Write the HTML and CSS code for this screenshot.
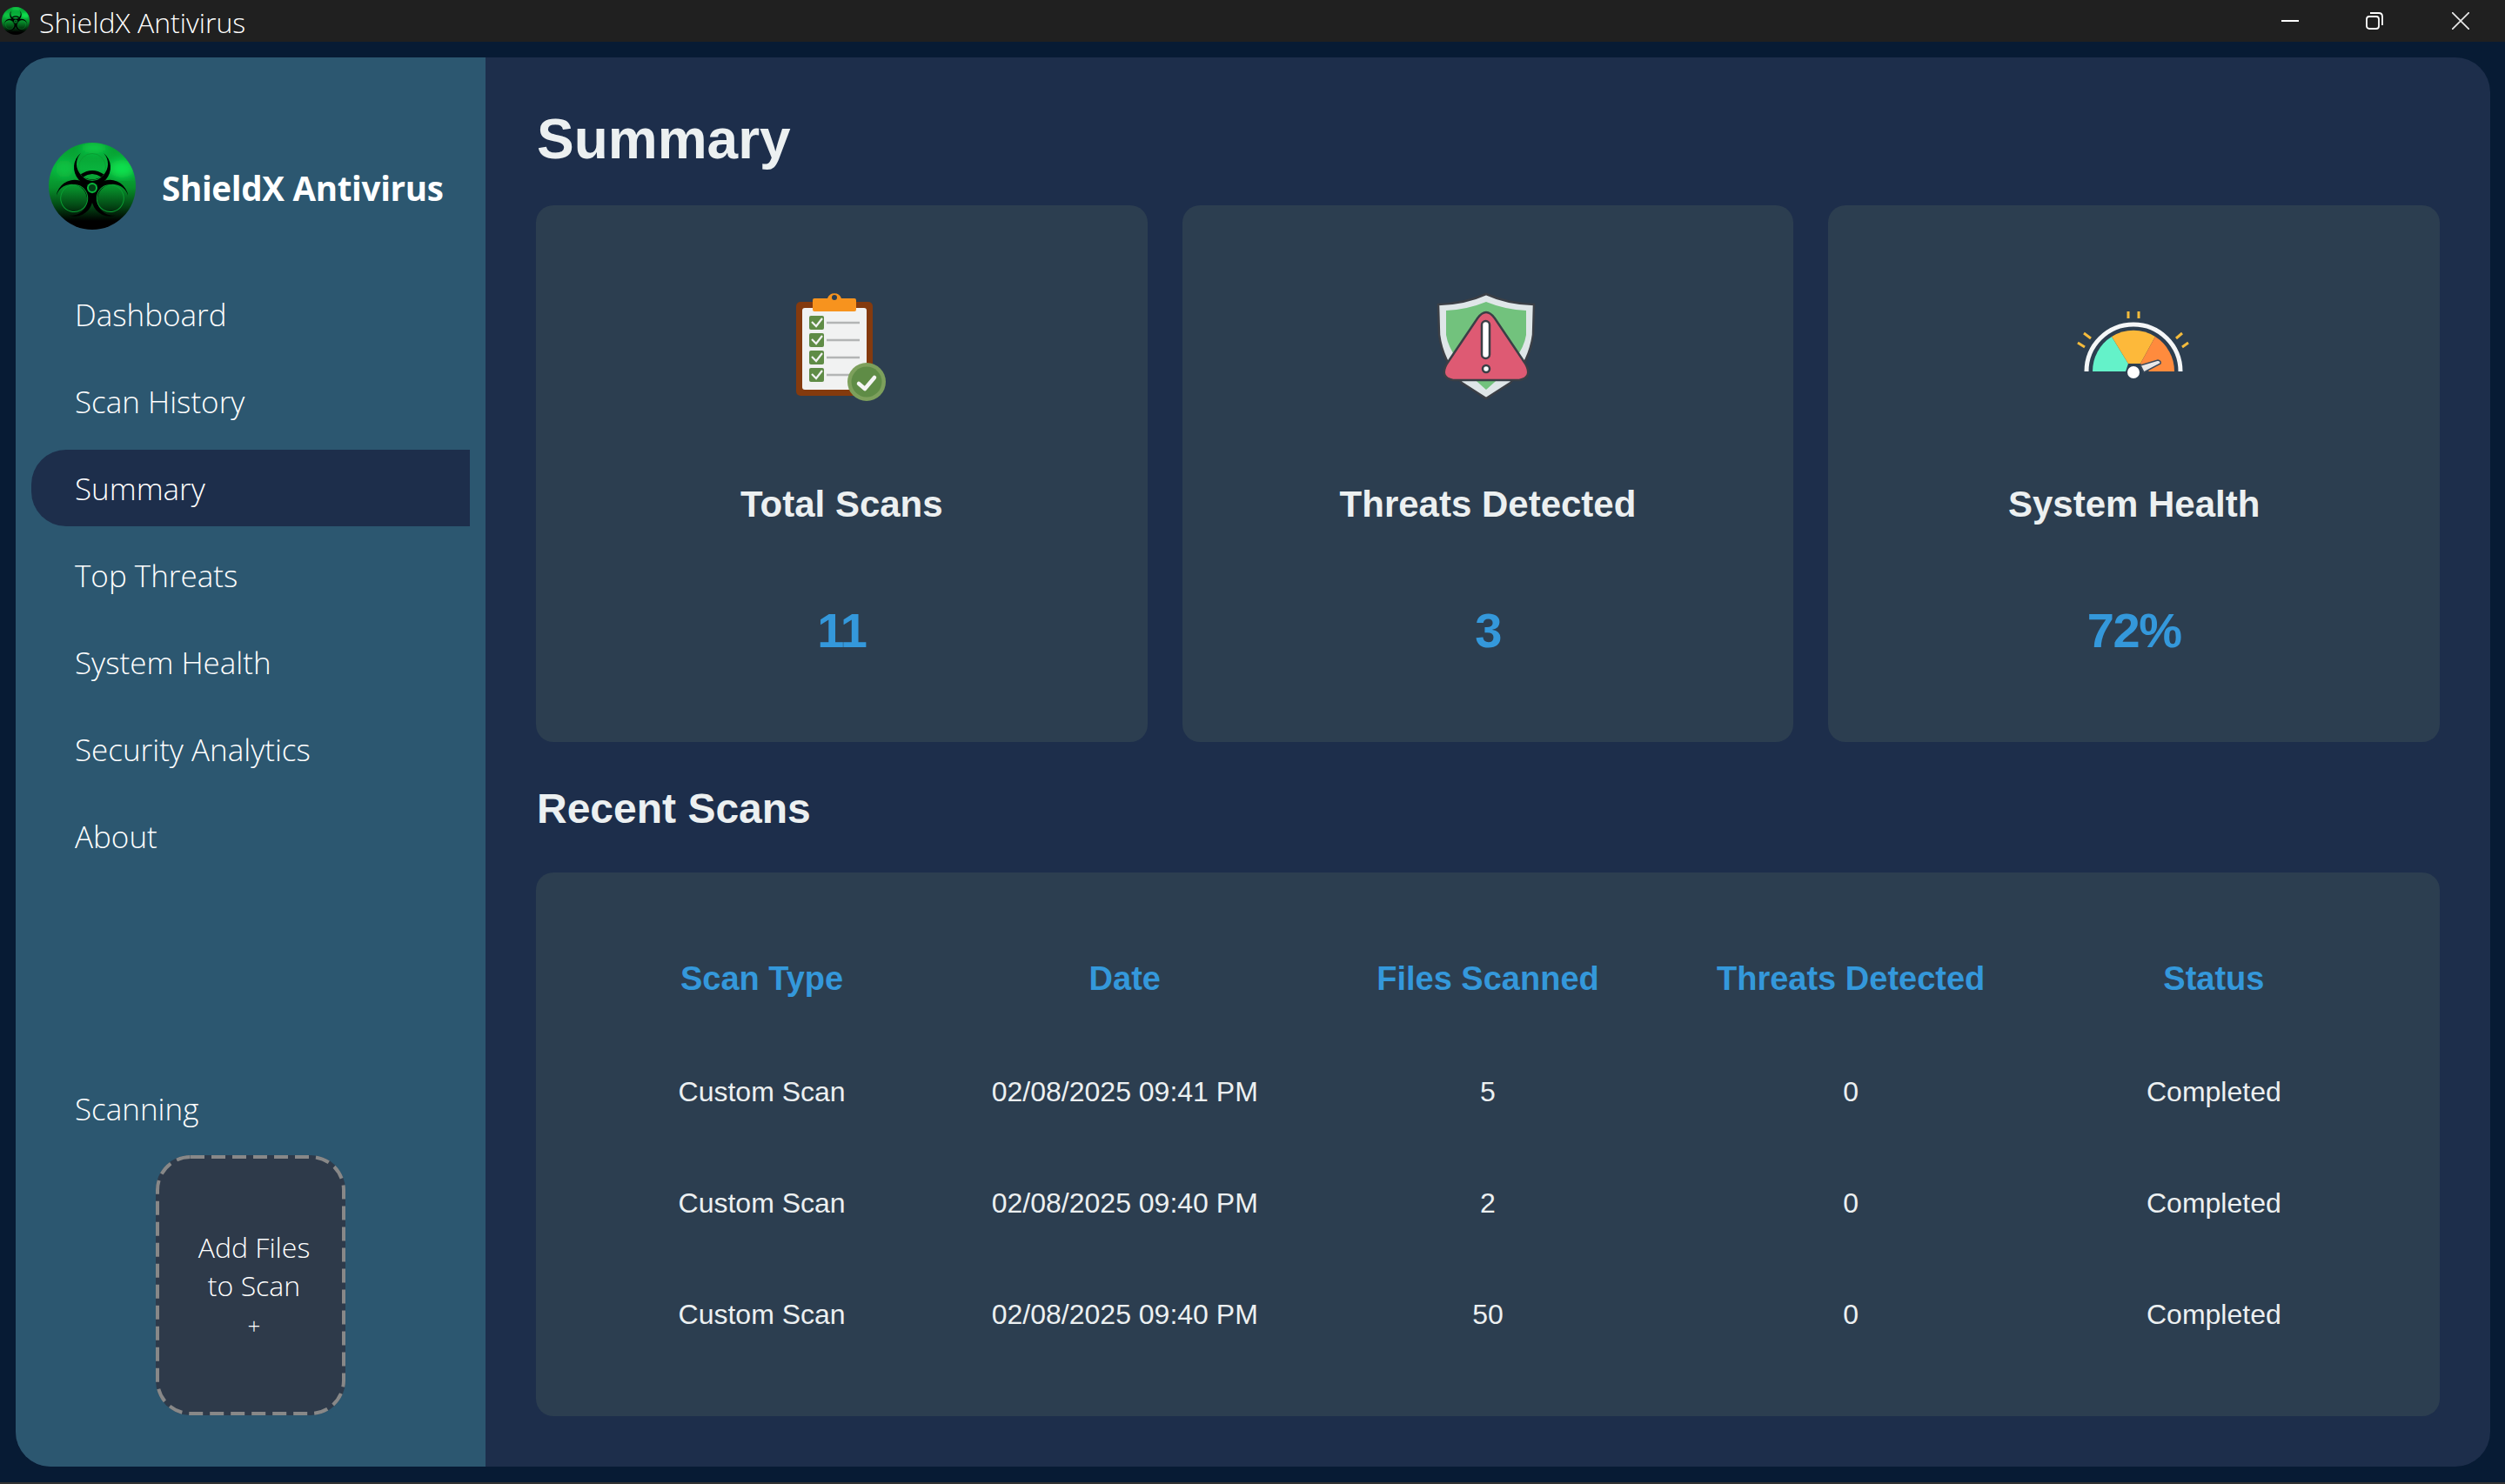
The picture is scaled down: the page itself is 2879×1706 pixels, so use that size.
FILE: index.html
```html
<!DOCTYPE html>
<html lang="en">
<head>
  <meta charset="UTF-8">
  <meta name="viewport" content="width=device-width, initial-scale=1.0">
  <title>ShieldX Antivirus</title>
  <link rel="stylesheet" href="styles.css">
</head>
<body>

  <svg class="defs" width="0" height="0">
    <defs>
      <linearGradient id="glow" x1="0" y1="0" x2="0" y2="1">
        <stop offset="0" stop-color="#069a30"/>
        <stop offset="0.3" stop-color="#09b23c"/>
        <stop offset="0.52" stop-color="#078f2b"/>
        <stop offset="0.72" stop-color="#034a15"/>
        <stop offset="0.9" stop-color="#000"/>
      </linearGradient>
      <filter id="soft"><feGaussianBlur stdDeviation="5"/></filter>
      <clipPath id="disc"><circle cx="50" cy="50" r="50"/></clipPath>
      <g id="bioArm">
        <path d="M37 12A21 21 0 1 0 63 12A18 18 0 1 1 37 12Z" fill="#000"/>
        <circle cx="50" cy="28" r="15.500" fill="none" stroke="#0a9e33" stroke-width="1"/>
      </g>
      <g id="biohazard">
        <circle cx="50" cy="50" r="50" fill="url(#glow)"/>
        <g clip-path="url(#disc)" filter="url(#soft)">
          <ellipse cx="84" cy="30" rx="14" ry="10" fill="#0fe04e"/>
          <ellipse cx="52" cy="6" rx="16" ry="6" fill="#0fd04a"/>
          <ellipse cx="18" cy="30" rx="10" ry="10" fill="#0cc243"/>
        </g>
        <use href="#bioArm"/>
        <use href="#bioArm" transform="rotate(120 50 52)"/>
        <use href="#bioArm" transform="rotate(240 50 52)"/>
        <path d="M38 38Q50 30 62 38" fill="none" stroke="#000" stroke-width="4"/>
        <circle cx="50" cy="52" r="5" fill="#024015" stroke="#0ab83c" stroke-width="2"/>
      </g>
    </defs>
  </svg>

  <header class="titlebar">
    <svg class="title-icon" viewBox="0 0 100 100"><use href="#biohazard"/></svg>
    <span class="title-text">ShieldX Antivirus</span>
    <div class="window-controls">
      <svg class="win-btn" viewBox="0 0 20 20"><path d="M0 10H20" stroke="#fff" stroke-width="2"/></svg>
      <svg class="win-btn" viewBox="0 0 20 20" fill="none" stroke="#fff" stroke-width="1.8"><rect x="1" y="5" width="14" height="14" rx="3"/><path d="M5 1H15Q19 1 19 5V15"/></svg>
      <svg class="win-btn" viewBox="0 0 20 20"><path d="M0 0L20 20M20 0L0 20" stroke="#e8e8e8" stroke-width="1.7"/></svg>
    </div>
  </header>

  <div class="shell">
    <aside class="sidebar">
      <div class="brand">
        <svg class="brand-logo" viewBox="0 0 100 100"><use href="#biohazard"/></svg>
        <span class="brand-name">ShieldX Antivirus</span>
      </div>

      <nav class="nav">
        <a class="nav-item">Dashboard</a>
        <a class="nav-item">Scan History</a>
        <a class="nav-item active">Summary</a>
        <a class="nav-item">Top Threats</a>
        <a class="nav-item">System Health</a>
        <a class="nav-item">Security Analytics</a>
        <a class="nav-item">About</a>
      </nav>

      <div class="scan-label">Scanning</div>
      <button class="add-files">
        <svg class="add-files-border" viewBox="0 0 218 299"><rect x="2" y="2" width="214" height="295" rx="38"/></svg>
        Add Files<br>to Scan<br><span class="plus">+</span>
      </button>
    </aside>

    <main class="content">
      <h1 class="page-title">Summary</h1>

      <section class="cards">
        <div class="card">
          <svg class="card-icon" viewBox="7 0 200 170">
            <rect x="55" y="37" width="88" height="108" rx="5" fill="#843a0e"/>
            <rect x="62" y="44" width="74" height="94" rx="3" fill="#f1f2f2"/>
            <path d="M76 33H91A8.500 8.500 0 0 1 107 33H122Q124 33 124 35V46Q124 48 122 48H76Q74 48 74 46V35Q74 33 76 33Z" fill="#f7931e"/>
            <circle cx="99" cy="32" r="3" fill="#2c3e50"/>
            <g id="clipRow">
              <rect x="70" y="53" width="17" height="16" rx="2" fill="#5f8c46"/>
              <path d="M73 60l5 5l7-9" fill="none" stroke="#f1f2f2" stroke-width="2.200"/>
              <path d="M90 61H128" stroke="#b3b5b5" stroke-width="2.500"/>
            </g>
            <use href="#clipRow" y="20"/>
            <use href="#clipRow" y="40"/>
            <use href="#clipRow" y="60"/>
            <circle cx="136" cy="129" r="22" fill="#7da05c"/>
            <circle cx="136" cy="129" r="17.500" fill="#5f8c46"/>
            <path d="M127 131l7 6l11-13" fill="none" stroke="#f5f5f5" stroke-width="4.500" stroke-linecap="round" stroke-linejoin="round"/>
          </svg>
          <h3 class="card-title">Total Scans</h3>
          <div class="card-value">11</div>
        </div>

        <div class="card">
          <svg class="card-icon" viewBox="0 0 200 170">
            <path d="M98 28Q122 39 153 40L152 75Q148 105 126 130L98 148L70 130Q48 105 44 75L43 40Q74 39 98 28Z" fill="#dfe6e8" stroke="#3b3f46" stroke-width="2.500"/>
            <path d="M98 37Q120 46 144 47V75Q140 102 98 138Q56 102 52 75V47Q76 46 98 37Z" fill="#72c27d"/>
            <path d="M88 56Q98 42 108 56L143 108Q152 124 136 127H60Q44 124 53 108Z" fill="#de5a73" stroke="#3b3f46" stroke-width="2.500"/>
            <rect x="93" y="59" width="9" height="43" rx="4.500" fill="#fff" stroke="#3b3f46" stroke-width="2.500"/>
            <circle cx="98" cy="114" r="4" fill="#fff" stroke="#3b3f46" stroke-width="2.500"/>
          </svg>
          <h3 class="card-title">Threats Detected</h3>
          <div class="card-value">3</div>
        </div>

        <div class="card">
          <svg class="card-icon" viewBox="-7 -20 200 170">
            <path d="M86 28V36M98 28V36M35 53L43 59M28 64L36 69M148 53L141 59M155 64L148 69" fill="none" stroke="#f4bb3c" stroke-width="3"/>
            <path d="M45 97A47 47 0 0 1 67 57L86 88L83 97Z" fill="#64f2c9"/>
            <path d="M67 57A47 47 0 0 1 117 57L100 88H86Z" fill="#fdb93a"/>
            <path d="M117 57A47 47 0 0 1 139 97H110L100 88Z" fill="#ff8b3d"/>
            <path d="M38 97A54 54 0 0 1 146 97" fill="none" stroke="#f4f6f7" stroke-width="5"/>
            <path d="M100 90L120 84Q124 85 123 88L104 98Z" fill="#e8e8e8" stroke="#3a4a5c" stroke-width="1.500"/>
            <circle cx="92" cy="98" r="7" fill="#fff"/>
          </svg>
          <h3 class="card-title">System Health</h3>
          <div class="card-value">72%</div>
        </div>
      </section>

      <h2 class="section-title">Recent Scans</h2>

      <section class="table-card">
        <table class="scans">
          <thead>
            <tr>
              <th>Scan Type</th>
              <th>Date</th>
              <th>Files Scanned</th>
              <th>Threats Detected</th>
              <th>Status</th>
            </tr>
          </thead>
          <tbody>
            <tr>
              <td>Custom Scan</td>
              <td>02/08/2025 09:41 PM</td>
              <td>5</td>
              <td>0</td>
              <td>Completed</td>
            </tr>
            <tr>
              <td>Custom Scan</td>
              <td>02/08/2025 09:40 PM</td>
              <td>2</td>
              <td>0</td>
              <td>Completed</td>
            </tr>
            <tr>
              <td>Custom Scan</td>
              <td>02/08/2025 09:40 PM</td>
              <td>50</td>
              <td>0</td>
              <td>Completed</td>
            </tr>
          </tbody>
        </table>
      </section>
    </main>
  </div>

</body>
</html>
```

FILE: styles.css
```css
* {
  box-sizing: border-box;
}

html, body {
  height: 100%;
}

body {
  margin: 0;
  background-color: #071b34;
  border-bottom: 2px solid #333;
  font-family: "Liberation Sans", Arial, sans-serif;
  color: #fff;
  display: flex;
  flex-direction: column;
  overflow: hidden;
}

.defs {
  position: absolute;
}

.titlebar {
  height: 48px;
  flex: none;
  background-color: #202020;
  display: flex;
  align-items: center;
  font-family: "Open Sans", "Noto Sans", sans-serif;
}

.title-icon {
  width: 32px;
  height: 32px;
  margin-left: 2px;
}

.title-text {
  margin: 2px 0 0 11px;
  font-size: 32px;
  font-weight: 300;
}

.window-controls {
  margin-left: auto;
  margin-right: 41px;
  display: flex;
  gap: 77px;
}

.win-btn {
  width: 20px;
  height: 20px;
  display: block;
}

.win-btn:last-child {
  margin-left: 2px;
}

.shell {
  height: 1620px;
  margin: 18px 17px 0 18px;
  display: flex;
  border-radius: 40px;
  overflow: hidden;
  background-color: #1d2e4b;
}

.sidebar {
  width: 540px;
  flex: none;
  background-color: #2c5770;
  padding: 98px 18px 0;
  font-family: "Open Sans", "Noto Sans", sans-serif;
  display: flex;
  flex-direction: column;
}

.brand {
  display: flex;
  align-items: center;
  padding-left: 20px;
  gap: 30px;
}

.brand-logo {
  width: 100px;
  height: 100px;
}

.brand-name {
  margin-top: 3px;
  font-size: 38.500px;
  font-weight: 700;
  letter-spacing: -0.3px;
}

.nav {
  margin-top: 53px;
  display: flex;
  flex-direction: column;
  gap: 12px;
}

.nav-item {
  height: 88px;
  padding: 1px 0 0 50px;
  display: flex;
  align-items: center;
  font-size: 35px;
  font-weight: 300;
  border-radius: 40px 0 0 40px;
}

.nav-item.active {
  background-color: #1d2e4b;
}

.scan-label {
  margin-top: 246px;
  margin-left: 50px;
  font-size: 35px;
  font-weight: 300;
}

.add-files {
  position: relative;
  width: 218px;
  height: 299px;
  margin: 30px 0 0 143px;
  padding: 3px 0 0 8px;
  background-color: #2e3a4a;
  border: none;
  border-radius: 40px;
  color: #fff;
  font-family: inherit;
  font-size: 32px;
  font-weight: 300;
  line-height: 44px;
}

.add-files-border {
  position: absolute;
  top: 0;
  left: 0;
  width: 100%;
  height: 100%;
  fill: none;
  stroke: #888;
  stroke-width: 4;
  stroke-dasharray: 16 8;
}

.plus {
  font-size: 26px;
}

.content {
  flex: 1;
  padding: 57px 58px 0 58px;
}

.page-title {
  margin: 0 0 0 1px;
  font-size: 64px;
  line-height: 74px;
  color: #ecf0f1;
}

.cards {
  margin-top: 39px;
  display: grid;
  grid-template-columns: repeat(3, 1fr);
  gap: 40px;
}

.card {
  height: 617px;
  background-color: #2c3e50;
  border-radius: 20px;
  display: flex;
  flex-direction: column;
  align-items: center;
  padding-top: 74px;
}

.card-icon {
  width: 200px;
  height: 170px;
  flex: none;
  filter: blur(0.5px);
}

.card-title {
  margin: 76px 0 0;
  font-size: 42px;
  line-height: 48px;
  color: #ecf0f1;
}

.card-value {
  margin-top: 90px;
  font-size: 56px;
  font-weight: bold;
  letter-spacing: -1.5px;
  line-height: 62px;
  color: #3498db;
}

.section-title {
  margin: 49px 0 0 1px;
  font-size: 48px;
  line-height: 56px;
  color: #ecf0f1;
}

.table-card {
  margin-top: 45px;
  height: 625px;
  padding: 56px 51px 0;
  background-color: #2c3e50;
  border-radius: 20px;
}

.scans {
  width: 100%;
  table-layout: fixed;
  border-collapse: collapse;
  text-align: center;
}

.scans th {
  height: 132px;
  font-size: 38px;
  color: #3498db;
}

.scans td {
  height: 128px;
  font-size: 32px;
  color: #ecf0f1;
}
```
